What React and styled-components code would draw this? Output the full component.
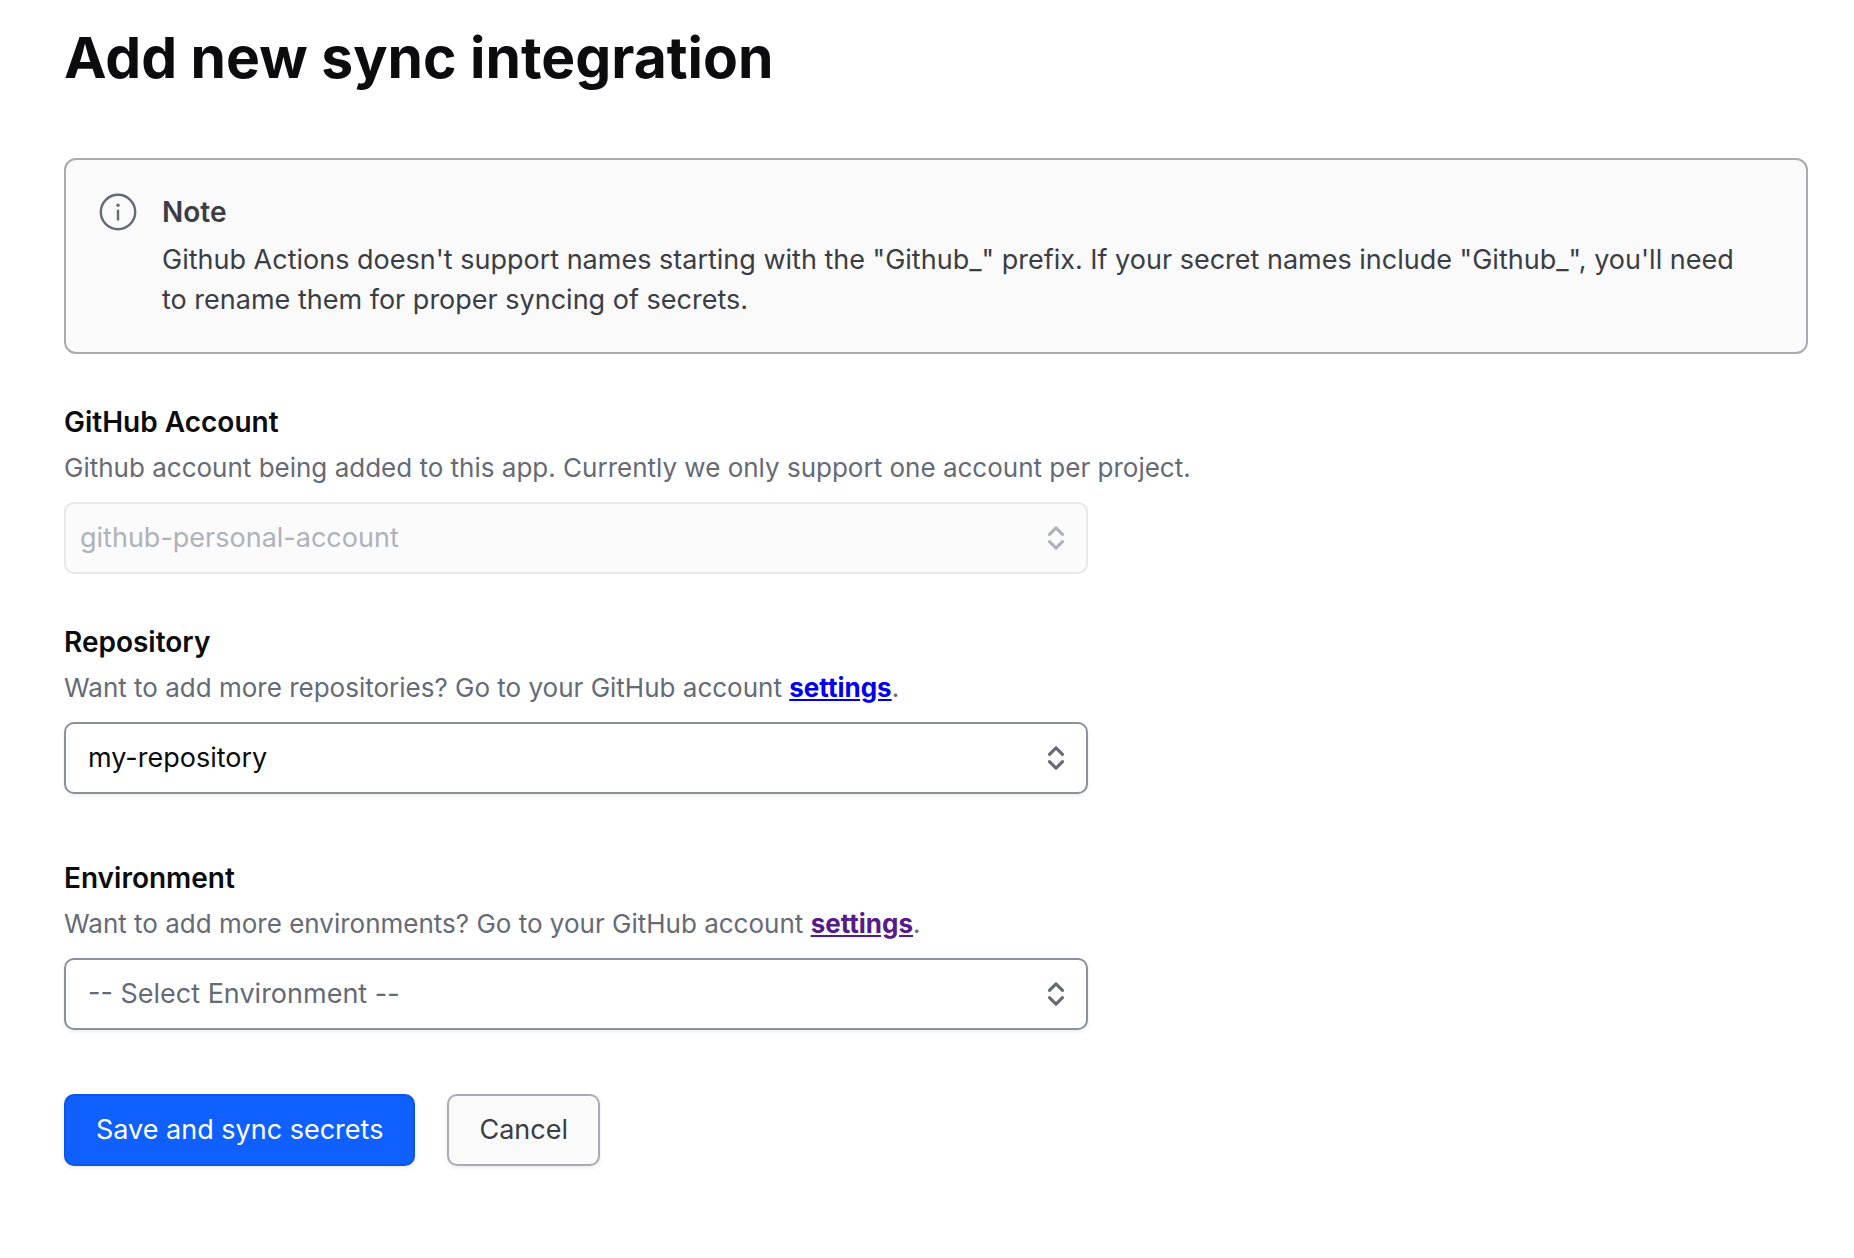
import React from "react";
import styled, { createGlobalStyle, css } from "styled-components";

const GlobalStyle = createGlobalStyle`
  *, *::before, *::after { box-sizing: border-box; }
  body {
    margin: 0;
    background: #ffffff;
    color: #0c0c0e;
    font-family: Inter, "Liberation Sans", sans-serif;
    font-size: 27px;
    line-height: 40px;
    -webkit-font-smoothing: antialiased;
  }
`;

const Page = styled.main`
  padding: 22px 46px 92px 64px;
`;

const Title = styled.h1`
  margin: 0 0 64px;
  font-size: 57px;
  line-height: 72px;
  font-weight: 700;
`;

const Callout = styled.section`
  display: flex;
  align-items: flex-start;
  gap: 24px;
  margin-bottom: 48px;
  padding: 32px 48px 32px 32px;
  border: 2px solid #abaab2;
  border-radius: 12px;
  background: #fafafa;
  color: #3b3d45;
`;

const CalloutIcon = styled.svg`
  flex: none;
  width: 40px;
  height: 40px;
  color: #656a76;
`;

const CalloutBody = styled.div`
  display: grid;
  gap: 8px;
`;

const CalloutTitle = styled.h2`
  margin: 0;
  font-size: 28px;
  line-height: 40px;
  font-weight: 600;
`;

const CalloutText = styled.p`
  margin: 0;
`;

const Form = styled.form`
  display: block;
`;

const Field = styled.div`
  display: grid;
  justify-items: start;
  margin-bottom: ${(p) => (p.$spacious ? 64 : 48)}px;
`;

const Label = styled.label`
  margin-bottom: 8px;
  font-size: 28px;
  font-weight: 600;
`;

const Help = styled.p`
  margin: 0 0 16px;
  color: #656a76;
  font-size: 26px;
  line-height: 36px;
`;

const HelpLink = styled.a`
  color: ${(p) => (p.$visited ? "#551a8b" : "#0000ee")};
  font-weight: 700;
  text-decoration: underline;
`;

const SelectFrame = styled.div`
  display: grid;
  align-items: center;
  width: 100%;
  max-width: 1024px;
  color: ${(p) => (p.$disabled ? "#b0b2bb" : "#656a76")};

  & > * { grid-area: 1 / 1; }
`;

const Select = styled.select`
  appearance: none;
  width: 100%;
  height: 72px;
  margin: 0;
  padding: 0 64px 0 22px;
  border: 2px solid #8c909c;
  border-radius: 10px;
  background: #ffffff;
  box-shadow: 0 2px 4px rgba(101, 106, 118, 0.12);
  color: ${(p) => (p.$placeholder ? "#656a76" : "#0c0c0e")};
  font: inherit;

  ${(p) =>
    p.disabled &&
    css`
      padding-left: 14px;
      border-color: #e7e7e9;
      background: #fbfbfb;
      box-shadow: none;
      color: #b0b2bb;
      opacity: 1;
    `}
`;

const Chevrons = styled.svg`
  justify-self: end;
  width: 32px;
  height: 32px;
  margin-right: 16px;
  pointer-events: none;
`;

const Actions = styled.div`
  display: flex;
  flex-wrap: wrap;
  gap: 32px;
`;

const Button = styled.button`
  height: 72px;
  padding: 0 30px;
  border: 2px solid ${(p) => (p.$primary ? "#0c56e9" : "#abaab2")};
  border-radius: 10px;
  background: ${(p) => (p.$primary ? "#1060ff" : "#fafafa")};
  box-shadow: 0 2px 4px rgba(101, 106, 118, 0.12);
  color: ${(p) => (p.$primary ? "#ffffff" : "#3b3d45")};
  font: inherit;
  cursor: pointer;
`;

function SelectField({ id, label, help, value, disabled, placeholder, spacious }) {
  return (
    <Field $spacious={spacious}>
      <Label htmlFor={id}>{label}</Label>
      <Help id={`${id}-help`}>{help}</Help>
      <SelectFrame $disabled={disabled}>
        <Select
          id={id}
          aria-describedby={`${id}-help`}
          disabled={disabled}
          $placeholder={placeholder}
        >
          <option>{value}</option>
        </Select>
        <Chevrons viewBox="0 0 32 32" fill="none" stroke="currentColor" strokeWidth="3.1" strokeLinecap="round" strokeLinejoin="round" aria-hidden="true">
          <path d="M9.5 12.3 16 5.8l6.5 6.5M9.5 19.7l6.5 6.5 6.5-6.5" />
        </Chevrons>
      </SelectFrame>
    </Field>
  );
}

export default function App() {
  return (
    <>
      <GlobalStyle />
      <Page>
        <Title>Add new sync integration</Title>
        <Callout>
          <CalloutIcon viewBox="0 0 40 40" fill="none" stroke="currentColor" strokeWidth="2.4" strokeLinecap="round" aria-hidden="true">
            <circle cx="20" cy="20" r="17.2" />
            <path d="M20 18.8v8.8" />
            <circle cx="20" cy="13.3" r="1.7" fill="currentColor" stroke="none" />
          </CalloutIcon>
          <CalloutBody>
            <CalloutTitle>Note</CalloutTitle>
            <CalloutText>
              Github Actions doesn't support names starting with the "Github_" prefix. If your secret names
              include "Github_", you'll need to rename them for proper syncing of secrets.
            </CalloutText>
          </CalloutBody>
        </Callout>
        <Form onSubmit={(event) => event.preventDefault()}>
          <SelectField
            id="account"
            label="GitHub Account"
            help="Github account being added to this app. Currently we only support one account per project."
            value="github-personal-account"
            disabled
          />
          <SelectField
            id="repository"
            label="Repository"
            help={<>Want to add more repositories? Go to your GitHub account <HelpLink href="#repositories">settings</HelpLink>.</>}
            value="my-repository"
            spacious
          />
          <SelectField
            id="environment"
            label="Environment"
            help={<>Want to add more environments? Go to your GitHub account <HelpLink href="#environments" $visited>settings</HelpLink>.</>}
            value="-- Select Environment --"
            placeholder
            spacious
          />
          <Actions>
            <Button type="submit" $primary>Save and sync secrets</Button>
            <Button type="button">Cancel</Button>
          </Actions>
        </Form>
      </Page>
    </>
  );
}
